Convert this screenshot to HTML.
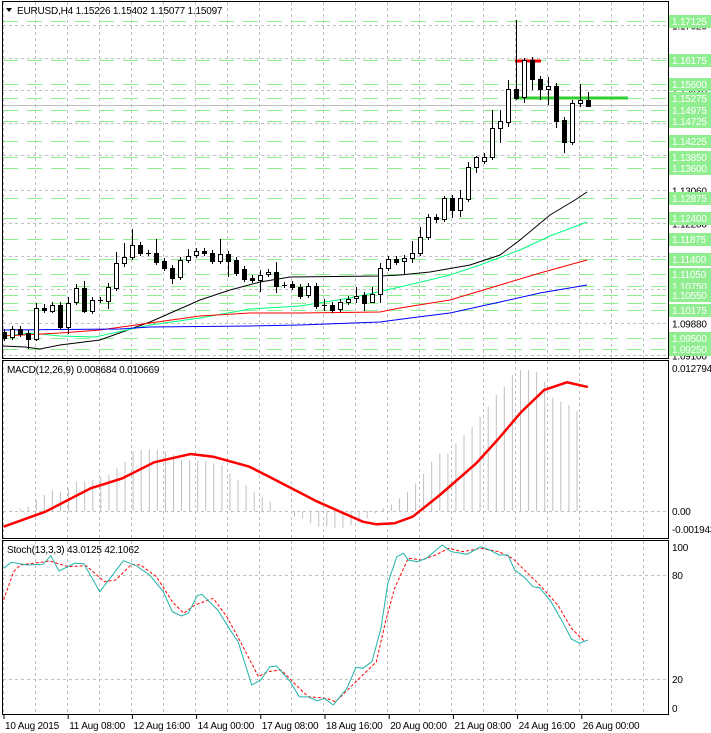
<!DOCTYPE html>
<html><head><meta charset="utf-8"><style>
html,body{margin:0;padding:0;background:#fff;width:711px;height:733px;overflow:hidden}
svg{display:block}
text{font-family:"Liberation Sans",sans-serif;font-size:10px;letter-spacing:-0.2px}
</style></head><body>
<svg id="s" width="711" height="733" xmlns="http://www.w3.org/2000/svg"></svg>
<script>
const S=document.getElementById('s');let h='';
const py=p=>25+(1.1702-p)*4167;
let vx=[3];for(let x=35;x<668;x+=32)vx.push(x);
function vgrid(y1,y2){vx.forEach(x=>{h+=`<line x1="${x+.5}" y1="${y1}" x2="${x+.5}" y2="${y2}" stroke="#c0c0c0" stroke-dasharray="3,3"/>`});}
vgrid(2,359);vgrid(361,538);vgrid(541,714);
const gl=[[1.1702,'1.17020'],[1.1624,''],[1.1546,'1.15420'],[1.1468,'1.14640'],[1.1390,''],[1.1306,'1.13060'],[1.1228,'1.12280'],[1.1148,'1.11480'],[1.1068,'1.10680'],[1.0988,'1.09880'],[1.0910,'1.09100']];
gl.forEach(g=>{const y=Math.round(py(g[0]))+.5;h+=`<line x1="3" y1="${y}" x2="668" y2="${y}" stroke="#c0c0c0" stroke-dasharray="3,3"/>`;if(g[1])h+=`<text x="672" y="${y+4}" fill="#000">${g[1]}</text>`;});
const lv=['1.17125','1.16175','1.15600','1.15275','1.14975','1.14725','1.14225','1.13850','1.13600','1.12875','1.12400','1.11875','1.11400','1.11050','1.10750','1.10550','1.10350','1.10175','1.09500','1.09250'];
lv.forEach(v=>{const y=Math.round(py(+v))+.5;h+=`<line x1="3" y1="${y}" x2="668" y2="${y}" stroke="#90ee90" stroke-width="1" stroke-dasharray="15,9"/>`;});
lv.forEach(v=>{const y=Math.round(py(+v));if(v!=='1.10350'){h+=`<rect x="669" y="${y-6}" width="42" height="13" fill="#90ee90"/><text x="672" y="${y+4}" fill="#fff">${v}</text>`;}});
function pl(pts,c,w,d){h+=`<polyline fill="none" stroke="${c}" stroke-width="${w}" ${d?'stroke-dasharray="'+d+'"':''} points="${pts.map(p=>p.join(',')).join(' ')}"/>`;}
pl([[3,346],[25,347],[40,349],[60,345],[100,340],[150,322],[200,300],[230,290],[260,282],[290,277],[380,276],[400,275],[430,272],[470,265],[500,255],[520,240],[550,215],[575,200],[587,192]],'#000',1);
pl([[3,336],[30,333],[60,336],[95,337],[150,325],[200,318],[250,309],[300,306],[350,298],[400,287],[450,275],[480,265],[520,250],[550,236],[587,222]],'#00ff7f',1);
pl([[3,336],[60,333],[100,330],[150,323],[200,316],[250,313],[300,313],[380,312],[400,308],[450,300],[500,285],[540,273],[587,260]],'#ff0000',1);
pl([[3,330],[120,329],[150,327],[250,326],[300,325],[380,322],[410,318],[450,313],[500,302],[540,293],[587,285]],'#0000ff',1);
h+=`<line x1="3" y1="105.5" x2="668" y2="105.5" stroke="#c0c0c0"/>`;
const C=[[332,338,329,341,0],[329,337,326,340,1],[329,334,326,337,0],[333,339,330,349,0],[308,339,303,341,1],[308,310,304,313,0],[305,311,302,313,1],[305,327,302,330,0],[303,327,297,334,1],[288,302,284,305,1],[288,311,281,313,0],[300,311,297,314,1],[300,300,297,303,1],[287,301,283,309,1],[263,288,252,291,1],[257,263,243,267,1],[245,257,229,260,1],[245,253,242,256,0],[253,253,250,256,1],[253,262,239,265,0],[261,268,258,271,0],[268,278,265,284,0],[260,277,257,280,1],[256,260,249,263,1],[251,255,248,258,1],[251,253,248,256,0],[253,261,250,264,0],[254,261,239,264,1],[254,261,251,277,0],[260,273,257,276,0],[269,279,266,282,0],[278,280,275,283,0],[275,280,270,292,1],[272,274,269,277,1],[272,286,262,293,0],[285,285,282,288,1],[284,287,281,290,0],[287,296,284,299,0],[286,295,283,298,1],[286,306,283,309,0],[305,305,299,311,1],[305,310,302,313,0],[302,309,299,312,1],[299,302,296,305,1],[296,298,287,303,1],[295,303,292,311,0],[294,302,287,303,1],[268,294,263,303,1],[259,268,256,271,1],[259,262,256,265,0],[258,261,255,274,1],[253,258,241,263,1],[237,253,227,256,1],[217,237,214,240,1],[217,219,214,223,0],[198,219,196,222,1],[198,210,195,218,0],[198,210,190,217,1],[167,199,162,202,1],[157,167,156,173,1],[157,161,153,164,1],[128,157,110,160,1],[121,128,110,143,1],[89,122,80,127,1],[89,98,20,100,0],[60,97,58,103,1],[60,79,57,90,0],[79,89,76,100,0],[86,89,77,105,1],[86,121,83,128,0],[120,142,117,153,0],[103,142,100,145,1],[100,103,84,107,1],[100,106,92,107,0]];
h+=`<line x1="515" y1="61" x2="541" y2="61" stroke="#ff0000" stroke-width="3"/>`;
h+=`<line x1="515" y1="98" x2="628" y2="98" stroke="#32cd32" stroke-width="3"/>`;
C.forEach((c,i)=>{const x=4+i*8;h+=`<line x1="${x+.5}" y1="${c[2]}" x2="${x+.5}" y2="${c[3]}" stroke="#000"/>`;
const t=Math.min(c[0],c[1]),b=Math.max(c[0],c[1]);
if(b-t<1)h+=`<line x1="${x-2}" y1="${t+.5}" x2="${x+3}" y2="${t+.5}" stroke="#000"/>`;
else h+=`<rect x="${x-2+.5}" y="${t+.5}" width="4" height="${b-t}" fill="${c[4]?'#fff':'#000'}" stroke="#000"/>`;});
h+=`<rect x="2.5" y="1.5" width="666" height="357" fill="none" stroke="#000"/>`;
h+=`<polygon points="6,8 12,8 9,12" fill="#000"/><text x="17" y="14" fill="#000">EURUSD,H4  1.15226 1.15402 1.15077 1.15097</text>`;
h+=`<line x1="3" y1="511.5" x2="668" y2="511.5" stroke="#c0c0c0" stroke-dasharray="3,3"/>`;
const mz=[472,465,460,455,435,420,405,410,400,380,380,375,365,360,340,320,290,285,283,285,290,300,315,315,318,318,325,330,355,375,390,410,425,440,468,470,485,490,505,515,515,518,520,510,500,490,475,460,448,430,410,385,355,320,295,295,265,240,215,185,155,120,95,60,45,45,50,80,128,140,150,168];
mz.forEach((z,i)=>{const x=4+i*8.07;const y=355+z/3;h+=`<line x1="${x.toFixed(1)}" y1="511" x2="${x.toFixed(1)}" y2="${y.toFixed(1)}" stroke="#c0c0c0"/>`;});
const sg=[[8,515],[100,470],[200,400],[270,370],[340,322],[420,297],[470,305],[550,335],[600,370],[700,440],[800,500],[830,508],[870,505],[910,485],[970,420],[1050,325],[1100,250],[1150,170],[1200,105],[1250,82],[1296,96]].map(p=>[(p[0]/2.205).toFixed(1),(355+p[1]/3).toFixed(1)]);
pl(sg,'#ff0000',2.5);
h+=`<rect x="2.5" y="360.5" width="666" height="178" fill="none" stroke="#000"/>`;
h+=`<text x="7" y="373" fill="#000">MACD(12,26,9) 0.008684 0.010669</text>`;
h+=`<text x="672" y="372" fill="#000">0.012794</text><text x="672" y="515" fill="#000">0.00</text><text x="672" y="533" fill="#000">-0.001943</text>`;
h+=`<line x1="3" y1="575.5" x2="668" y2="575.5" stroke="#c0c0c0" stroke-dasharray="3,3"/><line x1="3" y1="679.5" x2="668" y2="679.5" stroke="#c0c0c0" stroke-dasharray="3,3"/>`;
const cv=p=>[(p[0]/2.205).toFixed(1),(355+p[1]/3).toFixed(1)];
pl([[8,735],[30,650],[45,630],[110,618],[150,635],[190,632],[230,680],[255,675],[290,628],[310,630],[345,665],[380,740],[405,775],[430,750],[470,730],[500,785],[530,860],[570,965],[590,950],[620,945],[660,1000],[680,1025],[720,1030],[740,1040],[770,1000],[800,960],[830,920],[850,800],[870,700],[900,610],[930,615],[960,600],[990,580],[1020,590],[1060,580],[1100,590],[1130,610],[1160,650],[1190,690],[1230,750],[1260,820],[1290,860]].map(cv),'#ff0000',1,'3,2');
pl([[8,640],[25,622],[60,630],[95,628],[112,602],[130,648],[165,625],[185,626],[220,710],[272,617],[300,632],[330,660],[360,710],[380,770],[400,783],[415,775],[435,722],[445,718],[480,765],[510,830],[525,860],[555,990],[575,975],[595,935],[610,933],[640,980],[660,1025],[680,1026],[700,1038],[715,1030],[735,1050],[765,1000],[785,937],[800,940],[820,920],[840,820],[855,685],[875,605],[890,595],[900,615],[920,620],[940,610],[975,570],[995,590],[1030,598],[1060,575],[1080,585],[1100,600],[1120,600],[1135,645],[1155,665],[1175,695],[1190,698],[1215,740],[1240,800],[1260,852],[1278,865],[1296,855]].map(cv),'#20b2aa',1);
h+=`<rect x="2.5" y="540.5" width="666" height="174" fill="none" stroke="#000"/>`;
h+=`<text x="7" y="553" fill="#000">Stoch(13,3,3) 43.0125 42.1062</text>`;
h+=`<text x="672" y="551" fill="#000">100</text><text x="672" y="579" fill="#000">80</text><text x="672" y="683" fill="#000">20</text><text x="672" y="712" fill="#000">0</text>`;
const ds=['10 Aug 2015','11 Aug 08:00','12 Aug 16:00','14 Aug 00:00','17 Aug 08:00','18 Aug 16:00','20 Aug 00:00','21 Aug 08:00','24 Aug 16:00','26 Aug 00:00'];
ds.forEach((d,i)=>{const x=4+i*64.2;h+=`<line x1="${x.toFixed(1)}" y1="714" x2="${x.toFixed(1)}" y2="719" stroke="#000"/><text x="${(x+1).toFixed(1)}" y="729" fill="#000">${d}</text>`;});
S.innerHTML=h;
</script>
</body></html>
